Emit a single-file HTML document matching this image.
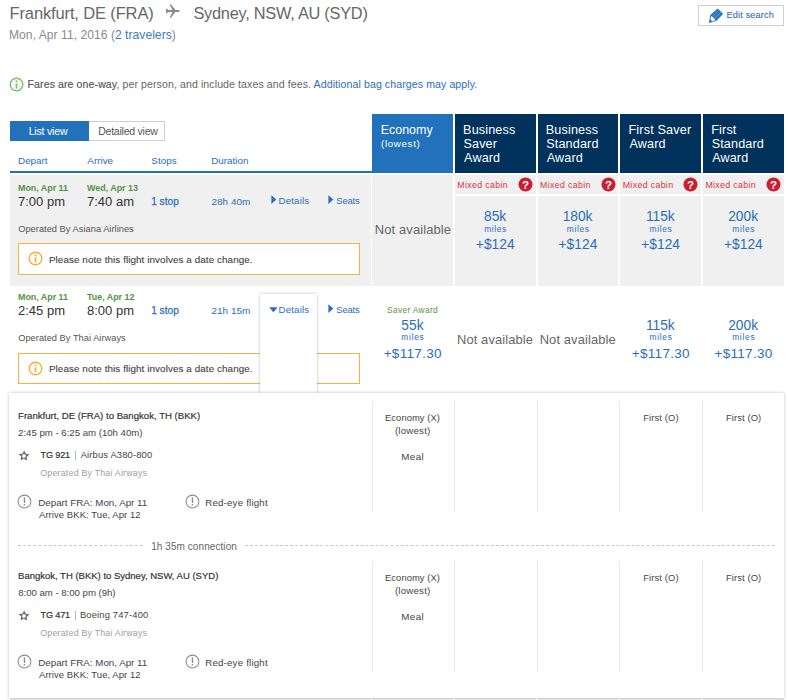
<!DOCTYPE html>
<html><head><meta charset="utf-8"><style>
html,body{margin:0;padding:0;background:#fff;width:788px;height:700px;overflow:hidden;position:relative}
body{font-family:"Liberation Sans",sans-serif}
.t{position:absolute;white-space:nowrap}
.r{position:absolute}
</style></head><body>
<div class="t" style="left:9.58px;top:6.00px;font-size:16.53px;line-height:16.53px;color:#666;letter-spacing:-0.146px;">Frankfurt, DE (FRA)</div>
<svg class="r" style="left:165px;top:4px" width="16" height="15" viewBox="0 0 16 15"><path d="M0.8 4.8 L2.0 4.8 L3.2 6.1 L7.5 6.1 L4.6 0.2 L5.9 0.2 L10.4 6.1 L14.0 6.1 Q15.4 7.0 14.0 7.9 L10.4 7.9 L5.9 13.8 L4.6 13.8 L7.5 7.9 L3.2 7.9 L2.0 9.2 L0.8 9.2 L1.2 7.0 Z" fill="#8a8a8a"/></svg>
<div class="t" style="left:193.46px;top:5.00px;font-size:16.35px;line-height:16.35px;color:#666;letter-spacing:-0.258px;">Sydney, NSW, AU (SYD)</div>
<div class="t" style="left:9.03px;top:29.00px;font-size:12.09px;line-height:12.09px;color:#8a8a8a;letter-spacing:0.039px;">Mon, Apr 11, 2016 (<span style="color:#3c7cc2">2 travelers</span>)</div>
<div class="r" style="left:698px;top:4.5px;width:86px;height:21.0px;border:1px solid #cfcfcf;box-sizing:border-box;background:#fff"></div>
<svg class="r" style="left:704px;top:5px" width="24" height="21" viewBox="0 0 24 21"><path d="M13.0 4.0 Q13.6 3.4 14.3 3.9 L18.6 8.2 Q19.2 8.9 18.6 9.5 L12.2 15.9 L4.9 17.9 L6.3 10.1 Z" fill="#2a73c2"/><path d="M7.2 11.0 Q9.6 12.2 11.2 15.0 Q9.8 16.6 8.0 16.2 Q6.6 15.4 6.6 13.6 Z" fill="#fff"/><path d="M8.6 11.6 L15.3 5.0 M10.5 13.5 L17.2 6.9" stroke="#6aa3dc" stroke-width="0.8"/></svg>
<div class="t" style="left:726.57px;top:11.00px;font-size:9.07px;line-height:9.07px;color:#2f6db5;letter-spacing:0.186px;-webkit-text-stroke:0.1px #2f6db5;">Edit search</div>
<svg class="r" style="left:8.6px;top:76.7px" width="15" height="15" viewBox="0 0 15 15"><circle cx="7.5" cy="7.5" r="6.3" fill="none" stroke="#78c264" stroke-width="1.4"/><rect x="6.6" y="6.5" width="1.8" height="5.0" fill="#78c264"/><rect x="6.6" y="3.4" width="1.8" height="1.7" fill="#78c264"/></svg>
<div class="t" style="left:27.55px;top:79.00px;font-size:10.56px;line-height:10.56px;color:#666;letter-spacing:0.101px;"><span style="color:#555;-webkit-text-stroke:0.15px #555">Fares are one-way</span>, per person, and include taxes and fees. <span style="color:#2a6ebb">Additional bag charges may apply.</span></div>
<div class="r" style="left:10px;top:121px;width:78.5px;height:20px;background:#2272bb"></div>
<div class="t" style="left:28.65px;top:126.00px;font-size:10.59px;line-height:10.59px;color:#fff;letter-spacing:-0.208px;">List view</div>
<div class="r" style="left:88.5px;top:121px;width:76.5px;height:20px;border:1px solid #cfcfcf;border-left:0;box-sizing:border-box;background:#fff"></div>
<div class="t" style="left:98.16px;top:126.00px;font-size:10.54px;line-height:10.54px;color:#555;letter-spacing:-0.241px;">Detailed view</div>
<div class="t" style="left:18.01px;top:156.00px;font-size:9.90px;line-height:9.90px;color:#2a6ebb;letter-spacing:-0.006px;">Depart</div>
<div class="t" style="left:87.30px;top:156.00px;font-size:9.90px;line-height:9.90px;color:#2a6ebb;letter-spacing:-0.006px;">Arrive</div>
<div class="t" style="left:151.35px;top:156.00px;font-size:9.90px;line-height:9.90px;color:#2a6ebb;letter-spacing:-0.006px;">Stops</div>
<div class="t" style="left:211.21px;top:156.00px;font-size:9.90px;line-height:9.90px;color:#2a6ebb;letter-spacing:-0.006px;">Duration</div>
<div class="r" style="left:9.5px;top:171px;width:362.5px;height:2px;background:#2272bb"></div>
<div class="r" style="left:372.3px;top:114.2px;width:80.80000000000001px;height:58.60000000000001px;background:#2272bb"></div>
<div class="r" style="left:455px;top:114.2px;width:80.79999999999995px;height:58.60000000000001px;background:#00325c"></div>
<div class="r" style="left:537.7px;top:114.2px;width:80.79999999999995px;height:58.60000000000001px;background:#00325c"></div>
<div class="r" style="left:620.4px;top:114.2px;width:80.79999999999995px;height:58.60000000000001px;background:#00325c"></div>
<div class="r" style="left:703.1px;top:114.2px;width:80.79999999999995px;height:58.60000000000001px;background:#00325c"></div>
<div class="t" style="left:380.80px;top:124.00px;font-size:12.45px;line-height:12.45px;color:#fff;letter-spacing:-0.006px;">Economy</div>
<div class="t" style="left:381.01px;top:139.00px;font-size:9.77px;line-height:9.77px;color:#fff;letter-spacing:0.654px;">(lowest)</div>
<div class="t" style="left:463.09px;top:124.00px;font-size:12.62px;line-height:12.62px;color:#fff;letter-spacing:0.143px;">Business</div>
<div class="t" style="left:463.53px;top:138.00px;font-size:12.59px;line-height:12.59px;color:#fff;letter-spacing:0.143px;">Saver</div>
<div class="t" style="left:464.10px;top:152.00px;font-size:12.58px;line-height:12.58px;color:#fff;letter-spacing:0.143px;">Award</div>
<div class="t" style="left:545.79px;top:124.00px;font-size:12.62px;line-height:12.62px;color:#fff;letter-spacing:0.143px;">Business</div>
<div class="t" style="left:546.23px;top:138.00px;font-size:12.62px;line-height:12.62px;color:#fff;letter-spacing:0.143px;">Standard</div>
<div class="t" style="left:546.80px;top:152.00px;font-size:12.58px;line-height:12.58px;color:#fff;letter-spacing:0.143px;">Award</div>
<div class="t" style="left:628.49px;top:124.00px;font-size:12.67px;line-height:12.67px;color:#fff;letter-spacing:0.143px;">First Saver</div>
<div class="t" style="left:629.50px;top:138.00px;font-size:12.58px;line-height:12.58px;color:#fff;letter-spacing:0.143px;">Award</div>
<div class="t" style="left:711.19px;top:124.00px;font-size:12.68px;line-height:12.68px;color:#fff;letter-spacing:0.143px;">First</div>
<div class="t" style="left:711.63px;top:138.00px;font-size:12.62px;line-height:12.62px;color:#fff;letter-spacing:0.143px;">Standard</div>
<div class="t" style="left:712.20px;top:152.00px;font-size:12.58px;line-height:12.58px;color:#fff;letter-spacing:0.143px;">Award</div>
<div class="r" style="left:9.5px;top:174.5px;width:361.0px;height:111.5px;background:#f0f0f0"></div>
<div class="t" style="left:18.02px;top:184.00px;font-size:8.91px;line-height:8.91px;color:#539345;letter-spacing:-0.014px;font-weight:bold;">Mon, Apr 11</div>
<div class="t" style="left:87.10px;top:184.00px;font-size:8.91px;line-height:8.91px;color:#539345;letter-spacing:-0.014px;font-weight:bold;">Wed, Apr 13</div>
<div class="t" style="left:17.95px;top:195.00px;font-size:13.02px;line-height:13.02px;color:#333;letter-spacing:0.004px;">7:00 pm</div>
<div class="t" style="left:86.95px;top:195.00px;font-size:13.02px;line-height:13.02px;color:#333;letter-spacing:0.004px;">7:40 am</div>
<div class="t" style="left:151.14px;top:197.00px;font-size:10.17px;line-height:10.17px;color:#2a6ebb;letter-spacing:0.012px;-webkit-text-stroke:0.25px #2a6ebb;">1 stop</div>
<div class="t" style="left:211.50px;top:197.00px;font-size:9.98px;line-height:9.98px;color:#2a6ebb;letter-spacing:0.011px;">28h 40m</div>
<svg class="r" style="left:270.5px;top:195px" width="6" height="10" viewBox="0 0 6 10"><path d="M0.4 0.3 L5.3 4.6 L0.4 8.9 Z" fill="#2a6ebb"/></svg>
<div class="t" style="left:278.52px;top:196.00px;font-size:9.71px;line-height:9.71px;color:#2a6ebb;letter-spacing:0.160px;">Details</div>
<svg class="r" style="left:328.3px;top:195px" width="6" height="10" viewBox="0 0 6 10"><path d="M0.4 0.3 L5.3 4.6 L0.4 8.9 Z" fill="#2a6ebb"/></svg>
<div class="t" style="left:336.27px;top:196.00px;font-size:9.46px;line-height:9.46px;color:#2a6ebb;letter-spacing:-0.155px;">Seats</div>
<div class="t" style="left:18.18px;top:225.00px;font-size:9.27px;line-height:9.27px;color:#555;letter-spacing:0.027px;">Operated By Asiana Airlines</div>
<div class="r" style="left:18px;top:243.3px;width:342px;height:31.69999999999999px;border:1px solid #efb73e;box-sizing:border-box;background:#fff"></div>
<svg class="r" style="left:27.6px;top:251.40px" width="15" height="15" viewBox="0 0 15 15"><circle cx="7.5" cy="7.5" r="6.3" fill="none" stroke="#f0b432" stroke-width="1.4"/><rect x="6.6" y="6.3" width="1.8" height="5.0" fill="#f0b432"/><rect x="6.6" y="3.4" width="1.8" height="1.7" fill="#f0b432"/></svg>
<div class="t" style="left:48.91px;top:255.00px;font-size:9.85px;line-height:9.85px;color:#444;letter-spacing:0.085px;-webkit-text-stroke:0.12px #444;">Please note this flight involves a date change.</div>
<div class="r" style="left:372.3px;top:174.5px;width:80.80000000000001px;height:111.5px;background:#f0f0f0"></div>
<div class="t" style="left:374.87px;top:224.00px;font-size:12.93px;line-height:12.93px;color:#666;letter-spacing:0.114px;">Not available</div>
<div class="r" style="left:455px;top:174.5px;width:80.79999999999995px;height:19.80000000000001px;background:#f0f0f0"></div>
<div class="r" style="left:455px;top:196.1px;width:80.79999999999995px;height:89.9px;background:#f0f0f0"></div>
<div class="t" style="left:457.30px;top:181.00px;font-size:8.80px;line-height:8.80px;color:#d8343e;letter-spacing:0.343px;">Mixed cabin</div>
<svg class="r" style="left:518.00px;top:177.4px" width="15" height="15" viewBox="0 0 15 15"><circle cx="7.5" cy="7.5" r="7.0" fill="#cb1e2e"/><text x="7.6" y="11.7" text-anchor="middle" font-family="Liberation Sans" font-weight="bold" font-size="11.5" fill="#fff">?</text></svg>
<div class="t" style="left:484.02px;top:210.00px;font-size:13.76px;line-height:13.76px;color:#2a6ebb;letter-spacing:-0.008px;">85k</div>
<div class="t" style="left:484.15px;top:225.00px;font-size:8.44px;line-height:8.44px;color:#2a6ebb;letter-spacing:0.633px;">miles</div>
<div class="t" style="left:475.86px;top:238.00px;font-size:13.77px;line-height:13.77px;color:#2a6ebb;letter-spacing:0.027px;">+$124</div>
<div class="r" style="left:537.7px;top:174.5px;width:80.79999999999995px;height:19.80000000000001px;background:#f0f0f0"></div>
<div class="r" style="left:537.7px;top:196.1px;width:80.79999999999995px;height:89.9px;background:#f0f0f0"></div>
<div class="t" style="left:540.00px;top:181.00px;font-size:8.80px;line-height:8.80px;color:#d8343e;letter-spacing:0.343px;">Mixed cabin</div>
<svg class="r" style="left:600.70px;top:177.4px" width="15" height="15" viewBox="0 0 15 15"><circle cx="7.5" cy="7.5" r="7.0" fill="#cb1e2e"/><text x="7.6" y="11.7" text-anchor="middle" font-family="Liberation Sans" font-weight="bold" font-size="11.5" fill="#fff">?</text></svg>
<div class="t" style="left:562.67px;top:210.00px;font-size:13.76px;line-height:13.76px;color:#2a6ebb;letter-spacing:-0.008px;">180k</div>
<div class="t" style="left:566.85px;top:225.00px;font-size:8.44px;line-height:8.44px;color:#2a6ebb;letter-spacing:0.633px;">miles</div>
<div class="t" style="left:558.56px;top:238.00px;font-size:13.77px;line-height:13.77px;color:#2a6ebb;letter-spacing:0.027px;">+$124</div>
<div class="r" style="left:620.4px;top:174.5px;width:80.79999999999995px;height:19.80000000000001px;background:#f0f0f0"></div>
<div class="r" style="left:620.4px;top:196.1px;width:80.79999999999995px;height:89.9px;background:#f0f0f0"></div>
<div class="t" style="left:622.70px;top:181.00px;font-size:8.80px;line-height:8.80px;color:#d8343e;letter-spacing:0.343px;">Mixed cabin</div>
<svg class="r" style="left:683.40px;top:177.4px" width="15" height="15" viewBox="0 0 15 15"><circle cx="7.5" cy="7.5" r="7.0" fill="#cb1e2e"/><text x="7.6" y="11.7" text-anchor="middle" font-family="Liberation Sans" font-weight="bold" font-size="11.5" fill="#fff">?</text></svg>
<div class="t" style="left:645.88px;top:210.00px;font-size:13.76px;line-height:13.76px;color:#2a6ebb;letter-spacing:-0.008px;">115k</div>
<div class="t" style="left:649.55px;top:225.00px;font-size:8.44px;line-height:8.44px;color:#2a6ebb;letter-spacing:0.633px;">miles</div>
<div class="t" style="left:641.26px;top:238.00px;font-size:13.77px;line-height:13.77px;color:#2a6ebb;letter-spacing:0.027px;">+$124</div>
<div class="r" style="left:703.1px;top:174.5px;width:80.79999999999995px;height:19.80000000000001px;background:#f0f0f0"></div>
<div class="r" style="left:703.1px;top:196.1px;width:80.79999999999995px;height:89.9px;background:#f0f0f0"></div>
<div class="t" style="left:705.40px;top:181.00px;font-size:8.80px;line-height:8.80px;color:#d8343e;letter-spacing:0.343px;">Mixed cabin</div>
<svg class="r" style="left:766.10px;top:177.4px" width="15" height="15" viewBox="0 0 15 15"><circle cx="7.5" cy="7.5" r="7.0" fill="#cb1e2e"/><text x="7.6" y="11.7" text-anchor="middle" font-family="Liberation Sans" font-weight="bold" font-size="11.5" fill="#fff">?</text></svg>
<div class="t" style="left:728.24px;top:210.00px;font-size:13.76px;line-height:13.76px;color:#2a6ebb;letter-spacing:-0.008px;">200k</div>
<div class="t" style="left:732.25px;top:225.00px;font-size:8.44px;line-height:8.44px;color:#2a6ebb;letter-spacing:0.633px;">miles</div>
<div class="t" style="left:723.96px;top:238.00px;font-size:13.77px;line-height:13.77px;color:#2a6ebb;letter-spacing:0.027px;">+$124</div>
<div class="t" style="left:18.02px;top:293.00px;font-size:8.91px;line-height:8.91px;color:#539345;letter-spacing:-0.014px;font-weight:bold;">Mon, Apr 11</div>
<div class="t" style="left:87.01px;top:293.00px;font-size:8.91px;line-height:8.91px;color:#539345;letter-spacing:-0.014px;font-weight:bold;">Tue, Apr 12</div>
<div class="t" style="left:17.95px;top:304.00px;font-size:13.02px;line-height:13.02px;color:#333;letter-spacing:0.004px;">2:45 pm</div>
<div class="t" style="left:87.01px;top:304.00px;font-size:13.02px;line-height:13.02px;color:#333;letter-spacing:0.004px;">8:00 pm</div>
<div class="t" style="left:151.14px;top:306.00px;font-size:10.17px;line-height:10.17px;color:#2a6ebb;letter-spacing:0.012px;-webkit-text-stroke:0.25px #2a6ebb;">1 stop</div>
<div class="t" style="left:211.50px;top:306.00px;font-size:9.98px;line-height:9.98px;color:#2a6ebb;letter-spacing:0.011px;">21h 15m</div>
<div class="r" style="left:18px;top:352.5px;width:342px;height:31.69999999999999px;border:1px solid #efb73e;box-sizing:border-box;background:#fff"></div>
<svg class="r" style="left:27.6px;top:360.60px" width="15" height="15" viewBox="0 0 15 15"><circle cx="7.5" cy="7.5" r="6.3" fill="none" stroke="#f0b432" stroke-width="1.4"/><rect x="6.6" y="6.3" width="1.8" height="5.0" fill="#f0b432"/><rect x="6.6" y="3.4" width="1.8" height="1.7" fill="#f0b432"/></svg>
<div class="t" style="left:48.91px;top:364.00px;font-size:9.85px;line-height:9.85px;color:#444;letter-spacing:0.085px;-webkit-text-stroke:0.12px #444;">Please note this flight involves a date change.</div>
<div class="r" style="left:260px;top:294.2px;width:57px;height:105.80000000000001px;background:#fff;box-shadow:0 0 3px rgba(0,0,0,.25)"></div>
<svg class="r" style="left:269px;top:307px" width="10" height="6" viewBox="0 0 10 6"><path d="M0.2 0.2 L8.6 0.2 L4.4 5.2 Z" fill="#2a6ebb"/></svg>
<div class="t" style="left:278.52px;top:305.00px;font-size:9.71px;line-height:9.71px;color:#2a6ebb;letter-spacing:0.160px;">Details</div>
<svg class="r" style="left:328.3px;top:304.3px" width="6" height="10" viewBox="0 0 6 10"><path d="M0.4 0.3 L5.3 4.6 L0.4 8.9 Z" fill="#2a6ebb"/></svg>
<div class="t" style="left:336.27px;top:305.00px;font-size:9.46px;line-height:9.46px;color:#2a6ebb;letter-spacing:-0.155px;">Seats</div>
<div class="t" style="left:18.18px;top:334.00px;font-size:9.27px;line-height:9.27px;color:#555;letter-spacing:0.027px;">Operated By Thai Airways</div>
<div class="t" style="left:387.12px;top:306.00px;font-size:8.35px;line-height:8.35px;color:#5a9444;letter-spacing:0.345px;">Saver Award</div>
<div class="t" style="left:401.36px;top:319.00px;font-size:13.76px;line-height:13.76px;color:#2a6ebb;letter-spacing:-0.008px;">55k</div>
<div class="t" style="left:401.36px;top:333.00px;font-size:8.35px;line-height:8.35px;color:#2a6ebb;letter-spacing:0.735px;">miles</div>
<div class="t" style="left:383.67px;top:347.00px;font-size:13.50px;line-height:13.50px;color:#2a6ebb;letter-spacing:0.306px;">+$117.30</div>
<div class="t" style="left:456.97px;top:334.00px;font-size:12.93px;line-height:12.93px;color:#666;letter-spacing:0.114px;">Not available</div>
<div class="t" style="left:539.67px;top:334.00px;font-size:12.93px;line-height:12.93px;color:#666;letter-spacing:0.114px;">Not available</div>
<div class="t" style="left:645.88px;top:319.00px;font-size:13.76px;line-height:13.76px;color:#2a6ebb;letter-spacing:-0.008px;">115k</div>
<div class="t" style="left:649.46px;top:333.00px;font-size:8.35px;line-height:8.35px;color:#2a6ebb;letter-spacing:0.735px;">miles</div>
<div class="t" style="left:631.77px;top:347.00px;font-size:13.50px;line-height:13.50px;color:#2a6ebb;letter-spacing:0.306px;">+$117.30</div>
<div class="t" style="left:728.24px;top:319.00px;font-size:13.76px;line-height:13.76px;color:#2a6ebb;letter-spacing:-0.008px;">200k</div>
<div class="t" style="left:732.16px;top:333.00px;font-size:8.35px;line-height:8.35px;color:#2a6ebb;letter-spacing:0.735px;">miles</div>
<div class="t" style="left:714.47px;top:347.00px;font-size:13.50px;line-height:13.50px;color:#2a6ebb;letter-spacing:0.306px;">+$117.30</div>
<div class="r" style="left:9.5px;top:698px;width:361.0px;height:2px;background:#e8e8e8"></div>
<div class="r" style="left:372.3px;top:698px;width:80.80000000000001px;height:2px;background:#e8e8e8"></div>
<div class="r" style="left:455px;top:698px;width:80.79999999999995px;height:2px;background:#e8e8e8"></div>
<div class="r" style="left:537.7px;top:698px;width:80.79999999999995px;height:2px;background:#e8e8e8"></div>
<div class="r" style="left:620.4px;top:698px;width:80.79999999999995px;height:2px;background:#e8e8e8"></div>
<div class="r" style="left:703.1px;top:698px;width:80.79999999999995px;height:2px;background:#e8e8e8"></div>
<div class="r" style="left:9px;top:392.5px;width:775px;height:305.5px;background:#fff;box-shadow:0 0 3px rgba(0,0,0,.25)"></div>
<div class="r" style="left:255px;top:392.5px;width:67px;height:9.5px;background:#fff"></div>
<div class="t" style="left:18.03px;top:411.00px;font-size:9.62px;line-height:9.62px;color:#333;letter-spacing:-0.007px;-webkit-text-stroke:0.18px #333;">Frankfurt, DE (FRA) to Bangkok, TH (BKK)</div>
<div class="t" style="left:18.12px;top:428.00px;font-size:9.63px;line-height:9.63px;color:#444;letter-spacing:-0.011px;">2:45 pm - 6:25 am (10h 40m)</div>
<svg class="r" style="left:18.3px;top:449.6px" width="12" height="12" viewBox="-6 -6 12 12"><g fill="#6a6a6a"><path transform="rotate(4)" d="M-0.4 -5.7 L2.4 -1.2 L-1.4 -2.2 Z"/><path transform="rotate(76)" d="M-0.4 -5.7 L2.4 -1.2 L-1.4 -2.2 Z"/><path transform="rotate(148)" d="M-0.4 -5.7 L2.4 -1.2 L-1.4 -2.2 Z"/><path transform="rotate(220)" d="M-0.4 -5.7 L2.4 -1.2 L-1.4 -2.2 Z"/><path transform="rotate(292)" d="M-0.4 -5.7 L2.4 -1.2 L-1.4 -2.2 Z"/></g></svg>
<div class="t" style="left:40.52px;top:451.00px;font-size:9.16px;line-height:9.16px;color:#333;letter-spacing:-0.173px;-webkit-text-stroke:0.2px #333;">TG 921</div>
<div class="r" style="left:74.6px;top:450.7px;width:1.0px;height:9.5px;background:#b8b8b8"></div>
<div class="t" style="left:80.70px;top:450.00px;font-size:9.40px;line-height:9.40px;color:#444;letter-spacing:0.157px;">Airbus A380-800</div>
<div class="t" style="left:40.30px;top:469.00px;font-size:8.83px;line-height:8.83px;color:#a0a0a0;letter-spacing:0.207px;">Operated By Thai Airways</div>
<svg class="r" style="left:17.45px;top:494.30px" width="15" height="15" viewBox="0 0 15 15"><circle cx="7.5" cy="7.5" r="6.4" fill="none" stroke="#8f8f8f" stroke-width="1.05"/><rect x="6.8" y="3.4" width="1.4" height="5.6" fill="#8f8f8f"/><rect x="6.8" y="10.0" width="1.4" height="1.4" fill="#8f8f8f"/></svg>
<div class="t" style="left:38.21px;top:498.00px;font-size:9.82px;line-height:9.82px;color:#444;letter-spacing:-0.019px;">Depart FRA: Mon, Apr 11</div>
<div class="t" style="left:39.00px;top:510.00px;font-size:9.50px;line-height:9.50px;color:#444;letter-spacing:0.060px;">Arrive BKK: Tue, Apr 12</div>
<svg class="r" style="left:184.50px;top:494.30px" width="15" height="15" viewBox="0 0 15 15"><circle cx="7.5" cy="7.5" r="6.4" fill="none" stroke="#8f8f8f" stroke-width="1.05"/><rect x="6.8" y="3.4" width="1.4" height="5.6" fill="#8f8f8f"/><rect x="6.8" y="10.0" width="1.4" height="1.4" fill="#8f8f8f"/></svg>
<div class="t" style="left:205.23px;top:498.00px;font-size:9.69px;line-height:9.69px;color:#444;letter-spacing:0.208px;">Red-eye flight</div>
<div class="t" style="left:385.05px;top:414.00px;font-size:9.37px;line-height:9.37px;color:#444;letter-spacing:0.071px;">Economy (X)</div>
<div class="t" style="left:394.92px;top:426.00px;font-size:9.68px;line-height:9.68px;color:#444;letter-spacing:0.212px;">(lowest)</div>
<div class="t" style="left:401.21px;top:452.00px;font-size:9.84px;line-height:9.84px;color:#444;letter-spacing:0.405px;">Meal</div>
<div class="t" style="left:643.15px;top:413.00px;font-size:9.40px;line-height:9.40px;color:#444;letter-spacing:0.132px;">First (O)</div>
<div class="t" style="left:726.05px;top:414.00px;font-size:9.35px;line-height:9.35px;color:#444;letter-spacing:0.107px;">First (O)</div>
<div class="r" style="left:372px;top:401px;width:1px;height:111px;background:#e9e9e9"></div>
<div class="r" style="left:454px;top:401px;width:1px;height:111px;background:#e9e9e9"></div>
<div class="r" style="left:537px;top:401px;width:1px;height:111px;background:#e9e9e9"></div>
<div class="r" style="left:619px;top:401px;width:1px;height:111px;background:#e9e9e9"></div>
<div class="r" style="left:702px;top:401px;width:1px;height:111px;background:#e9e9e9"></div>
<div class="t" style="left:18.04px;top:571.00px;font-size:9.55px;line-height:9.55px;color:#333;letter-spacing:-0.023px;-webkit-text-stroke:0.18px #333;">Bangkok, TH (BKK) to Sydney, NSW, AU (SYD)</div>
<div class="t" style="left:18.17px;top:588.00px;font-size:9.62px;line-height:9.62px;color:#444;letter-spacing:-0.016px;">8:00 am - 8:00 pm (9h)</div>
<svg class="r" style="left:18.3px;top:609.6px" width="12" height="12" viewBox="-6 -6 12 12"><g fill="#6a6a6a"><path transform="rotate(4)" d="M-0.4 -5.7 L2.4 -1.2 L-1.4 -2.2 Z"/><path transform="rotate(76)" d="M-0.4 -5.7 L2.4 -1.2 L-1.4 -2.2 Z"/><path transform="rotate(148)" d="M-0.4 -5.7 L2.4 -1.2 L-1.4 -2.2 Z"/><path transform="rotate(220)" d="M-0.4 -5.7 L2.4 -1.2 L-1.4 -2.2 Z"/><path transform="rotate(292)" d="M-0.4 -5.7 L2.4 -1.2 L-1.4 -2.2 Z"/></g></svg>
<div class="t" style="left:40.52px;top:611.00px;font-size:9.16px;line-height:9.16px;color:#333;letter-spacing:-0.173px;-webkit-text-stroke:0.2px #333;">TG 471</div>
<div class="r" style="left:74.6px;top:610.7px;width:1.0px;height:9.5px;background:#b8b8b8"></div>
<div class="t" style="left:79.95px;top:610.00px;font-size:9.40px;line-height:9.40px;color:#444;letter-spacing:0.161px;">Boeing 747-400</div>
<div class="t" style="left:40.30px;top:629.00px;font-size:8.83px;line-height:8.83px;color:#a0a0a0;letter-spacing:0.207px;">Operated By Thai Airways</div>
<svg class="r" style="left:17.45px;top:654.30px" width="15" height="15" viewBox="0 0 15 15"><circle cx="7.5" cy="7.5" r="6.4" fill="none" stroke="#8f8f8f" stroke-width="1.05"/><rect x="6.8" y="3.4" width="1.4" height="5.6" fill="#8f8f8f"/><rect x="6.8" y="10.0" width="1.4" height="1.4" fill="#8f8f8f"/></svg>
<div class="t" style="left:38.21px;top:658.00px;font-size:9.82px;line-height:9.82px;color:#444;letter-spacing:-0.019px;">Depart FRA: Mon, Apr 11</div>
<div class="t" style="left:39.00px;top:670.00px;font-size:9.50px;line-height:9.50px;color:#444;letter-spacing:0.060px;">Arrive BKK: Tue, Apr 12</div>
<svg class="r" style="left:184.50px;top:654.30px" width="15" height="15" viewBox="0 0 15 15"><circle cx="7.5" cy="7.5" r="6.4" fill="none" stroke="#8f8f8f" stroke-width="1.05"/><rect x="6.8" y="3.4" width="1.4" height="5.6" fill="#8f8f8f"/><rect x="6.8" y="10.0" width="1.4" height="1.4" fill="#8f8f8f"/></svg>
<div class="t" style="left:205.23px;top:658.00px;font-size:9.69px;line-height:9.69px;color:#444;letter-spacing:0.208px;">Red-eye flight</div>
<div class="t" style="left:385.05px;top:574.00px;font-size:9.37px;line-height:9.37px;color:#444;letter-spacing:0.071px;">Economy (X)</div>
<div class="t" style="left:394.92px;top:586.00px;font-size:9.68px;line-height:9.68px;color:#444;letter-spacing:0.212px;">(lowest)</div>
<div class="t" style="left:401.21px;top:612.00px;font-size:9.84px;line-height:9.84px;color:#444;letter-spacing:0.405px;">Meal</div>
<div class="t" style="left:643.15px;top:573.00px;font-size:9.40px;line-height:9.40px;color:#444;letter-spacing:0.132px;">First (O)</div>
<div class="t" style="left:726.05px;top:574.00px;font-size:9.35px;line-height:9.35px;color:#444;letter-spacing:0.107px;">First (O)</div>
<div class="r" style="left:372px;top:561px;width:1px;height:111px;background:#e9e9e9"></div>
<div class="r" style="left:454px;top:561px;width:1px;height:111px;background:#e9e9e9"></div>
<div class="r" style="left:537px;top:561px;width:1px;height:111px;background:#e9e9e9"></div>
<div class="r" style="left:619px;top:561px;width:1px;height:111px;background:#e9e9e9"></div>
<div class="r" style="left:702px;top:561px;width:1px;height:111px;background:#e9e9e9"></div>
<div class="r" style="left:18px;top:545px;width:125px;height:1px;border-top:1px dashed #c8c8c8;box-sizing:border-box"></div>
<div class="r" style="left:245px;top:545px;width:530px;height:1px;border-top:1px dashed #c8c8c8;box-sizing:border-box"></div>
<div class="t" style="left:151.15px;top:542.00px;font-size:10.04px;line-height:10.04px;color:#666;letter-spacing:0.059px;">1h 35m connection</div>
</body></html>
